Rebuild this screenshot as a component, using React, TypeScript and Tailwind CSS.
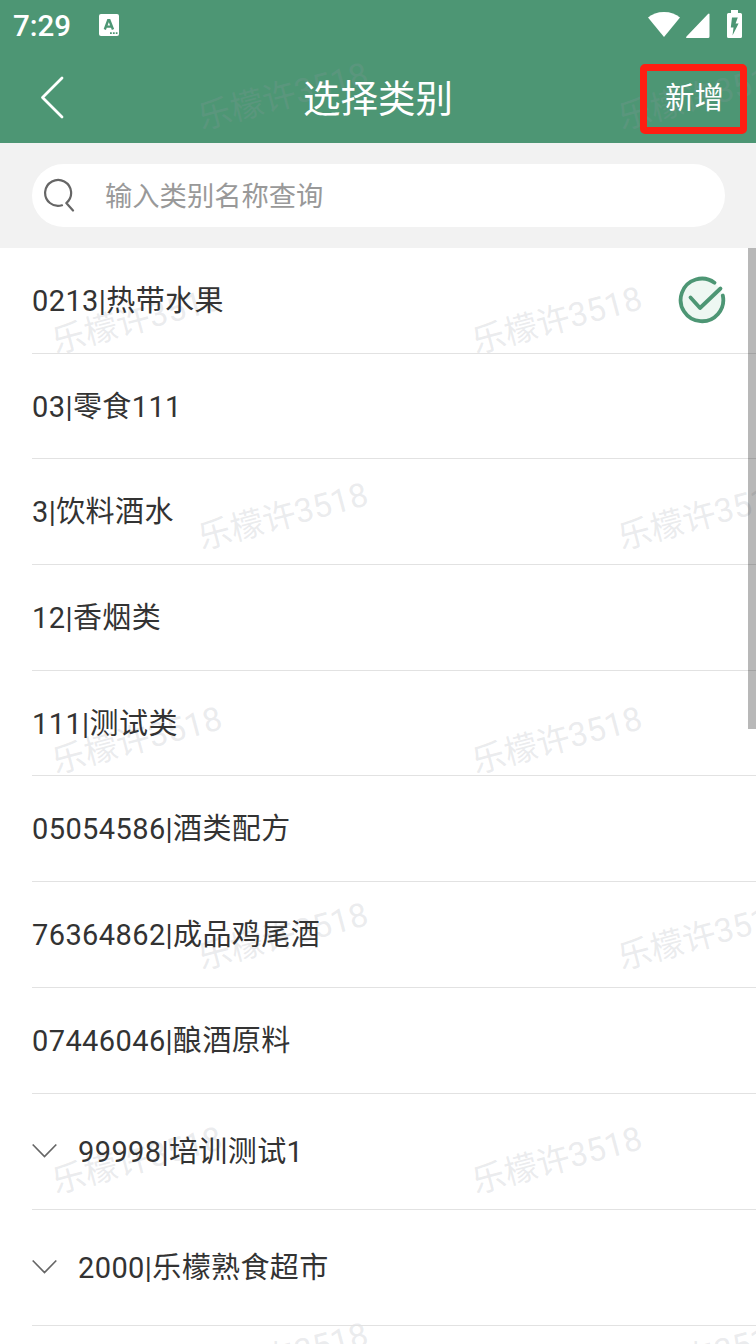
import React from 'react';

const categories = [
  { name: '0213|热带水果', selected: true },
  { name: '03|零食111' },
  { name: '3|饮料酒水' },
  { name: '12|香烟类' },
  { name: '111|测试类' },
  { name: '05054586|酒类配方' },
  { name: '76364862|成品鸡尾酒' },
  { name: '07446046|酿酒原料' },
  { name: '99998|培训测试1', expandable: true },
  { name: '2000|乐檬熟食超市', expandable: true },
];

// centre points of the rotated stamps
const stamps = [
  [283, 97], [703, 97],
  [137, 321], [557, 321],
  [283, 517], [703, 517],
  [137, 741], [557, 741],
  [283, 937], [703, 937],
  [137, 1161], [557, 1161],
  [283, 1357], [703, 1357],
];

const StatusBar = () => (
  <div className="h-[52px] flex items-start justify-between pl-[13px] text-white">
    <div className="flex items-center h-[52px]">
      <span className="text-[29.500px] leading-none font-medium w-[85.500px] pt-[2px]">7:29</span>
      <svg width="20" height="22" viewBox="0 0 20 22" className="-mt-0.5">
        <rect width="20" height="22" rx="2" fill="currentColor" />
        <path d="M5.800 15.500 9.200 6.300h1.200l3.600 9.200M7.300 12.600h5.400" fill="none" stroke="#4d9674" strokeWidth="2.400" />
        <path d="M11 19.200h7.500" stroke="#4d9674" strokeWidth="1.800" strokeDasharray="1.800 1.100" />
      </svg>
    </div>
    <svg width="108" height="40" viewBox="648 0 108 40" fill="currentColor">
      <path d="M664 37 648 17.500C652 14 657.500 12 664 12s12 2 16 5.500Z" />
      <path d="M709.500 14v22.500q0 1.500-1.500 1.500H686.500q-1-.5 0-1.500L708 14q1-1 1.500 0Z" />
      <path
        fillRule="evenodd"
        d="M731 10h7v3h2.500q1.500 0 1.500 1.500v22q0 1.500-1.500 1.500h-12q-1.500 0-1.500-1.500v-22q0-1.500 1.500-1.500h2.500ZM732 17.500 730.800 27.500h2.700L732.500 35.500 738.600 23.500h-3L737.800 17.500Z"
      />
    </svg>
  </div>
);

const Header = () => (
  <header className="h-[143px] bg-[#4d9674] text-white">
    <StatusBar />
    <div className="relative z-20 h-[91px] grid grid-cols-[1fr_auto_1fr] items-center">
      <svg width="26" height="44" viewBox="0 0 26 44" fill="none" stroke="currentColor" strokeWidth="2.800" strokeLinecap="round" strokeLinejoin="round" className="ml-10 -mt-0.5">
        <path d="M22 3 2.500 22.500 22 42" />
      </svg>
      <h1 className="text-[37.500px] leading-none pt-[5px]">选择类别</h1>
      <button className="justify-self-end mr-[9px] mt-[2px] w-[107px] h-[70px] pl-[2px] rounded-[5px] border-[7px] border-[#ff1e12] text-[29.400px] leading-none">
        新增
      </button>
    </div>
  </header>
);

const SearchBar = () => (
  <div className="h-[105px] bg-[#f2f2f2] pl-8 pr-[31px] pt-[21px]">
    <div className="h-[63px] rounded-full bg-white flex items-center pl-3 text-[27.300px] leading-none text-[#999]">
      <svg width="32" height="34" viewBox="0 0 32 34" fill="none" stroke="#666" strokeWidth="2.200" strokeLinecap="round" className="-mt-0.5">
        <path d="M18 27.300A13 13 0 1 1 22.300 25L29 32.500" strokeLinejoin="round" />
      </svg>
      <span className="ml-[29px] pt-[5px]">输入类别名称查询</span>
    </div>
  </div>
);

const CheckIcon = () => (
  <svg width="48" height="48" viewBox="0 0 48 48" fill="none" stroke="#4d9674" strokeWidth="3.800" strokeLinecap="round" strokeLinejoin="round">
    <circle cx="24" cy="24" r="21" fill="#eef7f2" stroke="none" />
    <path d="M36.500 6.700A21.300 21.300 0 1 0 44.800 19.500" />
    <path d="m12.500 21.500 9.500 10.500L42.500 12.500" />
  </svg>
);

const App = () => {
  return (
    <div className="relative isolate w-[756px] h-[1344px] overflow-hidden bg-white font-['Roboto','Noto_Sans_CJK_SC',sans-serif]">
      <Header />
      <SearchBar />

      <ul className="relative z-10 pl-8 text-[#333] text-[29px] tracking-[0.400px] leading-none">
        {categories.map((item) => (
          <li
            key={item.name}
            className={`flex items-center border-b border-[#e2e2e2] ${item.expandable ? 'h-[116.100px]' : 'h-[105.700px]'}`}
          >
            {item.expandable && (
              <svg width="25" height="16" viewBox="0 0 25 16" fill="none" stroke="#666" strokeWidth="1.700" className="mr-[21px]">
                <path d="m.7 1.500 11.800 12L24.300 1.500" />
              </svg>
            )}
            <span className="pt-[2px]">{item.name}</span>
            {item.selected && (
              <span className="ml-auto mr-[30.500px]">
                <CheckIcon />
              </span>
            )}
          </li>
        ))}
      </ul>

      {/* Watermark */}
      <div className="absolute inset-0 pointer-events-none select-none">
        {stamps.map(([x, y]) => (
          <span
            key={`${x}-${y}`}
            className="absolute -translate-x-1/2 -translate-y-1/2 -rotate-[15deg] whitespace-nowrap text-[33.200px] leading-none text-[#969ba5]/20"
            style={{ left: x, top: y - 1 }}
          >
            乐檬许3518
          </span>
        ))}
      </div>

      {/* Scrollbar thumb */}
      <div className="absolute z-20 right-0 top-[248px] w-[8.500px] h-[481px] bg-black/[0.28]" />
    </div>
  );
};

export default App;
